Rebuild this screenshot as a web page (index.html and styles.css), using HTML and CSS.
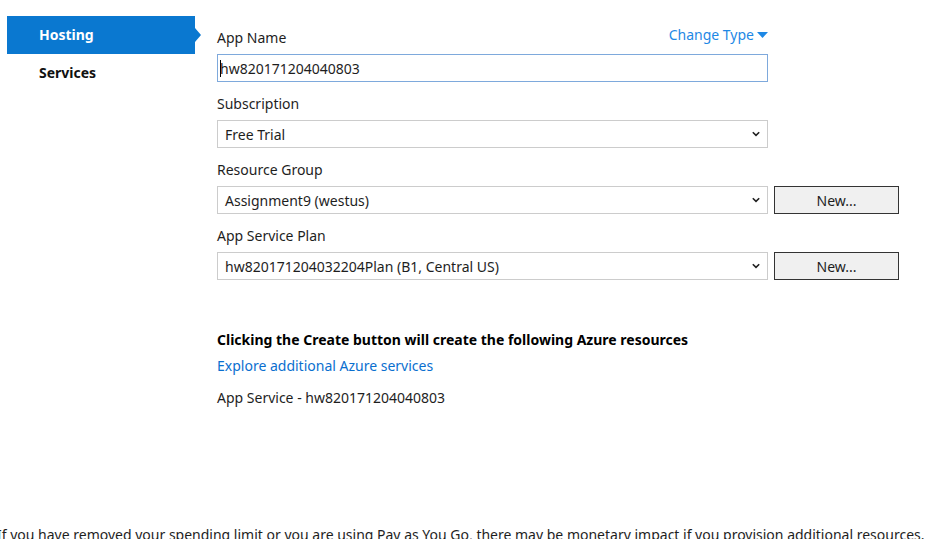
FILE: index.html
```html
<!DOCTYPE html>
<html>
<head>
<meta charset="utf-8">
<link rel="stylesheet" href="styles.css">
</head>
<body>
<div class="page">
  <div class="layout">
    <nav class="sidebar">
      <div class="tab tab-active">Hosting</div>
      <div class="tab">Services</div>
    </nav>
    <main class="main">
      <div class="field">
        <div class="label-row">
          <span class="label">App Name</span>
          <a class="change-type">Change Type<svg class="tri" width="11" height="6" viewBox="0 0 11 6"><path d="M0 0 L11 0 L5.5 6 Z" fill="#1e88e5"/></svg></a>
        </div>
        <div class="input"><span class="caret"></span>hw820171204040803</div>
      </div>
      <div class="field">
        <div class="label">Subscription</div>
        <div class="select">Free Trial<svg class="chev" width="8" height="6" viewBox="0 0 8 6"><path d="M0.8 1.2 L4 4.4 L7.2 1.2" fill="none" stroke="#222" stroke-width="1.6"/></svg></div>
      </div>
      <div class="field">
        <div class="label">Resource Group</div>
        <div class="control-row">
          <div class="select">Assignment9 (westus)<svg class="chev" width="8" height="6" viewBox="0 0 8 6"><path d="M0.8 1.2 L4 4.4 L7.2 1.2" fill="none" stroke="#222" stroke-width="1.6"/></svg></div>
          <div class="btn">New...</div>
        </div>
      </div>
      <div class="field">
        <div class="label">App Service Plan</div>
        <div class="control-row">
          <div class="select">hw820171204032204Plan (B1, Central US)<svg class="chev" width="8" height="6" viewBox="0 0 8 6"><path d="M0.8 1.2 L4 4.4 L7.2 1.2" fill="none" stroke="#222" stroke-width="1.6"/></svg></div>
          <div class="btn">New...</div>
        </div>
      </div>
      <div class="heading">Clicking the Create button will create the following Azure resources</div>
      <a class="link">Explore additional Azure services</a>
      <div class="resource">App Service - hw820171204040803</div>
    </main>
  </div>
  <div class="notice">If you have removed your spending limit or you are using Pay as You Go, there may be monetary impact if you provision additional resources.</div>
</div>
</body>
</html>
```
FILE: styles.css
```css
html, body {
  margin: 0;
  padding: 0;
  background: #ffffff;
  overflow: hidden;
}
body {
  font-family: "Segoe UI", "Noto Sans", "Open Sans", sans-serif;
  font-size: 14px;
  color: #1e1e1e;
  width: 944px;
  height: 539px;
}
.page {
  height: 539px;
  overflow: hidden;
}
.layout {
  display: flex;
}
.sidebar {
  width: 188px;
  margin-left: 7px;
  padding-top: 16px;
  display: flex;
  flex-direction: column;
}
.tab {
  height: 38px;
  line-height: 38px;
  padding-left: 32px;
  font-weight: bold;
  color: #111;
  position: relative;
}
.tab-active {
  background: #0a78d0;
  color: #ffffff;
}
.tab-active::after {
  content: "";
  position: absolute;
  right: -6px;
  top: 12px;
  border-top: 7px solid transparent;
  border-bottom: 7px solid transparent;
  border-left: 6px solid #0a78d0;
}
.main {
  margin-left: 22px;
  padding-top: 28px;
  display: flex;
  flex-direction: column;
}
.field {
  display: flex;
  flex-direction: column;
  margin-bottom: 12px;
}
.label-row {
  display: flex;
  justify-content: space-between;
  align-items: flex-start;
  width: 551px;
}
.label {
  line-height: 20px;
  height: 20px;
}
.change-type {
  color: #1e88e5;
  line-height: 14px;
  display: flex;
  align-items: center;
  gap: 3px;
}
.tri {
  display: block;
}
.input, .select {
  box-sizing: border-box;
  width: 551px;
  height: 28px;
  margin-top: 6px;
  display: flex;
  align-items: center;
}
.input {
  border: 1px solid #7ea9dc;
  padding-left: 2px;
}
.caret {
  width: 1px;
  height: 17px;
  background: #000;
  margin-right: -1px;
}
.select {
  border: 1px solid #cccccc;
  padding-left: 7px;
  justify-content: space-between;
  padding-right: 7px;
}
.chev {
  display: block;
}
.control-row {
  display: flex;
  gap: 6px;
  align-items: flex-end;
}
.btn {
  box-sizing: border-box;
  width: 125px;
  height: 28px;
  border: 1px solid #333333;
  background: #f0f0f0;
  display: flex;
  align-items: center;
  justify-content: center;
}
.heading {
  margin-top: 38px;
  font-weight: bold;
  line-height: 20px;
  color: #000;
}
.link {
  margin-top: 6px;
  line-height: 20px;
  color: #0a6fcf;
}
.resource {
  margin-top: 12px;
  line-height: 20px;
}
.notice {
  margin-top: 117px;
  margin-left: -3px;
  line-height: 20px;
  white-space: nowrap;
}
```
